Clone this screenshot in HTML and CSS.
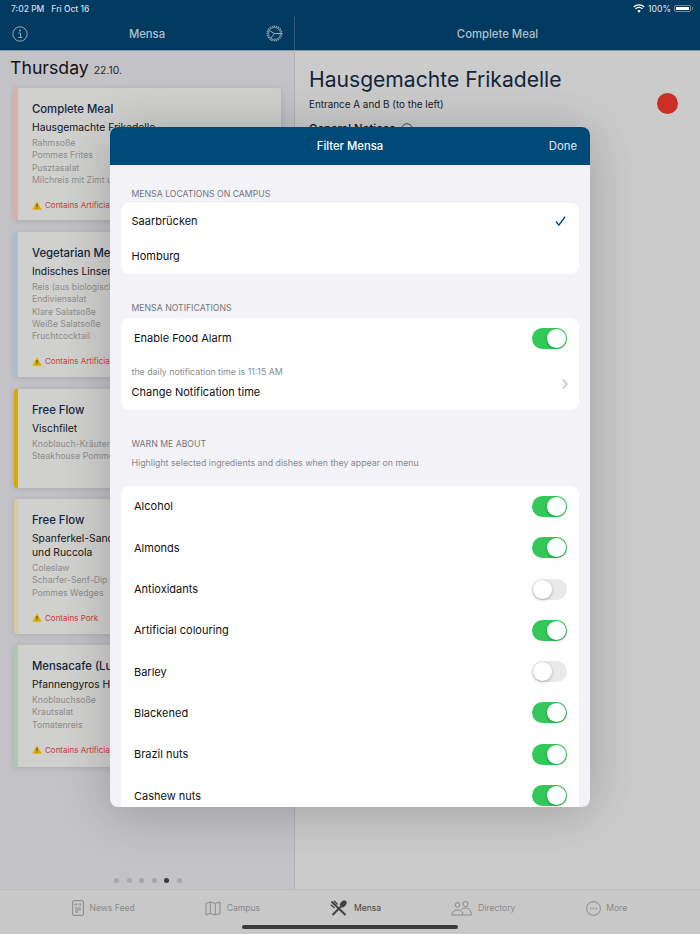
FILE: index.html
```html
<!DOCTYPE html>
<html lang="en">
<head>
<meta charset="utf-8">
<title>Mensa</title>
<link rel="stylesheet" href="styles.css">
</head>
<body>
<div class="app">
  <header class="topbar">
    <div class="status">
      <span class="status-left"><span>7:02 PM</span><span>Fri Oct 16</span></span>
      <span class="status-right">
        <svg class="wifi" width="12" height="9" viewBox="0 0 13 10"><path d="M6.5 9.6 4.6 7.5a2.7 2.7 0 0 1 3.8 0z" fill="#fff"/><path d="M2.6 5.4a5.5 5.5 0 0 1 7.8 0M.7 3.3a8.3 8.3 0 0 1 11.6 0" fill="none" stroke="#fff" stroke-width="1.5"/></svg>
        <span>100%</span>
        <span class="battery"><span class="battery-fill"></span></span>
      </span>
    </div>
    <div class="navs">
      <div class="nav nav-left">
        <svg class="nav-icon" width="16" height="16" viewBox="0 0 16 16"><circle cx="8" cy="8" r="7.2" fill="none" stroke="#95a9b8" stroke-width="1"/><circle cx="8" cy="4.6" r="1" fill="#95a9b8"/><path d="M6.4 7h2.1v4.4M6.2 11.5h4" fill="none" stroke="#95a9b8" stroke-width="1"/></svg>
        <span class="nav-title">Mensa</span>
        <svg class="nav-icon" width="17" height="17" viewBox="0 0 17 17"><circle cx="8.5" cy="8.5" r="7.2" fill="none" stroke="#95a9b8" stroke-width="1.5" stroke-dasharray="1.3 .9"/><circle cx="8.5" cy="8.5" r="6" fill="none" stroke="#95a9b8" stroke-width=".8"/><path d="M3.2 5.6 8.4 8.5 4.8 13.3M8.4 8.5h6" fill="none" stroke="#95a9b8" stroke-width="1"/></svg>
      </div>
      <div class="nav nav-right"><span class="nav-title">Complete Meal</span></div>
    </div>
  </header>

  <main class="split">
    <section class="left">
      <h1 class="day">Thursday <small>22.10.</small></h1>
      <article class="card card-red">
        <h2>Complete Meal</h2>
        <h3>Hausgemachte Frikadelle</h3>
        <ul><li>Rahmsoße</li><li>Pommes Frites</li><li>Pusztasalat</li><li>Milchreis mit Zimt und Zucker</li></ul>
        <p class="warn"><svg class="tri" viewBox="0 0 10 9"><path d="M5 .3 9.8 8.7H.2z"/><path class="mark" d="M4.6 3h.8v3h-.8zM4.6 6.6h.8v.9h-.8z"/></svg>Contains Artificial colouring</p>
      </article>
      <article class="card card-blue">
        <h2>Vegetarian Meal</h2>
        <h3>Indisches Linsencurry</h3>
        <ul><li>Reis (aus biologischem Anbau)</li><li>Endiviensalat</li><li>Klare Salatsoße</li><li>Weiße Salatsoße</li><li>Fruchtcocktail</li></ul>
        <p class="warn"><svg class="tri" viewBox="0 0 10 9"><path d="M5 .3 9.8 8.7H.2z"/><path class="mark" d="M4.6 3h.8v3h-.8zM4.6 6.6h.8v.9h-.8z"/></svg>Contains Artificial colouring</p>
      </article>
      <article class="card card-gold">
        <h2>Free Flow</h2>
        <h3>Vischfilet</h3>
        <ul><li>Knoblauch-Kräuter-Soße</li><li>Steakhouse Pommes</li></ul>
      </article>
      <article class="card card-sand">
        <h2>Free Flow</h2>
        <h3>Spanferkel-Sandwich<br>und Ruccola</h3>
        <ul><li>Coleslaw</li><li>Scharfer-Senf-Dip</li><li>Pommes Wedges</li></ul>
        <p class="warn"><svg class="tri" viewBox="0 0 10 9"><path d="M5 .3 9.8 8.7H.2z"/><path class="mark" d="M4.6 3h.8v3h-.8zM4.6 6.6h.8v.9h-.8z"/></svg>Contains Pork</p>
      </article>
      <article class="card card-green">
        <h2>Mensacafe (Lunch)</h2>
        <h3>Pfannengyros Hähnchen</h3>
        <ul><li>Knoblauchsoße</li><li>Krautsalat</li><li>Tomatenreis</li></ul>
        <p class="warn"><svg class="tri" viewBox="0 0 10 9"><path d="M5 .3 9.8 8.7H.2z"/><path class="mark" d="M4.6 3h.8v3h-.8zM4.6 6.6h.8v.9h-.8z"/></svg>Contains Artificial colouring</p>
      </article>
      <div class="dots"><i></i><i></i><i></i><i></i><i class="on"></i><i></i></div>
    </section>
    <section class="right">
      <div class="detail-head">
        <div>
          <h1 class="detail-title">Hausgemachte Frikadelle</h1>
          <p class="detail-sub">Entrance A and B (to the left)</p>
        </div>
        <span class="red-dot"></span>
      </div>
      <p class="notices">General Notices<svg width="12" height="12" viewBox="0 0 12 12" fill="none" stroke="#4a4a4c"><circle cx="6" cy="6" r="5.3"/></svg></p>
    </section>
  </main>

  <nav class="tabbar">
    <a class="tab"><svg width="12" height="16" viewBox="0 0 12 16" fill="none" stroke="#8a8a8a"><rect x=".6" y=".6" width="10.8" height="14.8" rx="1.4"/><path d="M3 3.5v2M4.5 3.5v2M7 3.5v2M8.5 3.5v2M3 8h6M3 10h6M3 12h3"/></svg>News Feed</a>
    <a class="tab"><svg width="16" height="15" viewBox="0 0 16 15" fill="none" stroke="#8a8a8a"><path d="M1 2.5 5.3 1l5 1.5L15 1v11.5L10.3 14l-5-1.500L1 14zM5.3 1v11.500M10.3 2.500V14"/></svg>Campus</a>
    <a class="tab tab-on"><svg width="18" height="16" viewBox="0 0 18 16" fill="none" stroke="#444"><path d="M1.500 1.500 15.500 15" stroke-width="2"/><path d="M.8 4.800 4.500 8M4 .8 7.500 4.500" stroke-width="1.400"/><path d="M2.500 15 11 6.500" stroke-width="2"/><ellipse cx="13.300" cy="3.800" rx="2.800" ry="3.900" transform="rotate(42 13.300 3.800)" fill="#444" stroke="none"/></svg>Mensa</a>
    <a class="tab"><svg width="21" height="15" viewBox="0 0 21 15" fill="none" stroke="#8a8a8a"><circle cx="6.500" cy="4" r="2.300"/><circle cx="14.500" cy="3" r="2.600"/><path d="M.8 14c0-3 2.500-5 5.700-5s5.500 2 5.500 5zM10.500 8.300c1-.7 2.500-1.300 4-1.300 3.500 0 5.800 2.600 5.800 7h-8"/></svg>Directory</a>
    <a class="tab"><svg width="15" height="15" viewBox="0 0 15 15" fill="none" stroke="#8a8a8a"><circle cx="7.500" cy="7.500" r="6.900"/><path d="M4 7.500h1.200M6.900 7.500h1.200M9.800 7.500H11" stroke-width="1.400"/></svg>More</a>
    <span class="home-bar"></span>
  </nav>

  <div class="modal">
    <div class="modal-head">
      <span class="modal-title">Filter Mensa</span>
      <span class="modal-done">Done</span>
    </div>
    <div class="modal-body">
      <p class="label label-first">MENSA LOCATIONS ON CAMPUS</p>
      <div class="group">
        <div class="row row-loc"><span>Saarbrücken</span><svg width="11" height="10" viewBox="0 0 12 11" fill="none" stroke="#004a7a" stroke-width="1.500"><path d="M1 6 4.300 10 11 .8"/></svg></div>
        <div class="row row-loc"><span>Homburg</span></div>
      </div>
      <p class="label label-notif">MENSA NOTIFICATIONS</p>
      <div class="group">
        <div class="row row-toggle"><span>Enable Food Alarm</span><span class="switch on"></span></div>
        <div class="row-change">
          <div class="change-text"><p class="hint">the daily notification time is 11:15 AM</p><p class="change">Change Notification time</p></div>
          <svg width="6" height="10" viewBox="0 0 6 10" fill="none" stroke="#b8b8bc" stroke-width="1.200"><path d="M.7.7 5 5 .7 9.300"/></svg>
        </div>
      </div>
      <p class="label label-warn">WARN ME ABOUT</p>
      <p class="hint hint-warn">Highlight selected ingredients and dishes when they appear on menu</p>
      <div class="group">
        <div class="row row-toggle"><span>Alcohol</span><span class="switch on"></span></div>
        <div class="row row-toggle"><span>Almonds</span><span class="switch on"></span></div>
        <div class="row row-toggle"><span>Antioxidants</span><span class="switch"></span></div>
        <div class="row row-toggle"><span>Artificial colouring</span><span class="switch on"></span></div>
        <div class="row row-toggle"><span>Barley</span><span class="switch"></span></div>
        <div class="row row-toggle"><span>Blackened</span><span class="switch on"></span></div>
        <div class="row row-toggle"><span>Brazil nuts</span><span class="switch on"></span></div>
        <div class="row row-toggle"><span>Cashew nuts</span><span class="switch on"></span></div>
      </div>
    </div>
  </div>
</div>
</body>
</html>
```
FILE: styles.css
```css
* { box-sizing: border-box; }
html, body { margin: 0; padding: 0; }
body { font-family: Inter, "Liberation Sans", sans-serif; width: 700px; height: 934px; overflow: hidden; }
h1, h2, h3, p, ul { margin: 0; padding: 0; font-weight: 400; }
li { list-style: none; }

.app { position: relative; width: 700px; height: 934px; display: flex; flex-direction: column; overflow: hidden; background: #c9c9c9; }

.topbar { height: 51px; flex: none; background: #003a60; border-bottom: 1px solid #8a9aa6; display: flex; flex-direction: column; }
.status { height: 17px; padding: 0 9px 0 11px; display: flex; justify-content: space-between; align-items: center; font-size: 8.5px; font-weight: 500; color: #d5dde3; }
.status-left { display: flex; gap: 7px; }
.status-right { display: flex; align-items: center; gap: 3px; }
.battery { position: relative; width: 17px; height: 7px; padding: 1px; border-radius: 2px; border: 1px solid #6f8ba0; display: block; }
.battery::after { content: ""; position: absolute; right: -3px; top: 1px; width: 1px; height: 3px; background: #6f8ba0; }
.battery-fill { display: block; width: 100%; height: 100%; background: #fff; }
.navs { flex: 1; display: flex; }
.nav { display: flex; align-items: center; justify-content: center; height: 33px; }
.nav-left { width: 295px; padding: 0 11px 0 12px; justify-content: space-between; border-right: 1px solid #33607f; }
.nav-right { flex: 1; }
.nav-title { font-size: 11.3px; font-weight: 500; color: #b2c0cb; }

.split { flex: 1; display: flex; min-height: 0; }
.left { position: relative; width: 295px; flex: none; background: #c2c2c7; border-right: 1px solid #b0b0b4; padding: 5px 13px 0 14px; }
.day { font-size: 17.7px; line-height: 24px; height: 24px; margin: 0 0 8px -4px; color: #141416; }
.day small { font-size: 10.4px; line-height: 1; color: #2b2b2e; }
.card { background: #d0d0cf; border-radius: 3px; padding: 13.5px 0 0 14px; margin-bottom: 12px; box-shadow: 0 1px 6px rgba(0,0,0,.12); border-left: 4px solid; overflow: hidden; white-space: nowrap; }
.card h2 { font-size: 11.3px; line-height: 15px; font-weight: 500; color: #112640; margin-bottom: 3.5px; }
.card h3 { font-size: 10.3px; line-height: 14px; color: #141416; margin-bottom: 3px; }
.card ul { font-size: 8.7px; line-height: 12.3px; color: #8c8c8c; }
.card-red { height: 132px; border-color: #dcaeac; }
.card-blue { height: 145px; border-color: #a9bdd4; }
.card-gold { height: 99px; margin-bottom: 11px; border-color: #d4a900; }
.card-sand { height: 135px; margin-bottom: 11px; border-color: #d9cb9f; }
.card-green { height: 122px; border-color: #adc7b3; }
.warn { display: flex; align-items: center; gap: 3px; margin-top: 13px; font-size: 8px; line-height: 12px; color: #cc3b35; }
.tri { width: 10px; height: 9px; fill: #e0ad00; }
.tri .mark { fill: #2c2400; }
.dots { position: absolute; left: 114px; bottom: 6px; display: flex; gap: 7.5px; }
.dots i { width: 5px; height: 5px; border-radius: 50%; background: #a8a8ac; }
.dots i.on { background: #3c3c40; }

.right { flex: 1; padding: 15px 22px 0 14px; background: #cbcbcb; }
.detail-head { display: flex; justify-content: space-between; align-items: flex-end; }
.detail-title { font-size: 21.1px; line-height: 28px; color: #13253b; }
.detail-sub { font-size: 9.9px; line-height: 13px; margin-top: 4px; color: #1c1c1e; }
.red-dot { width: 21px; height: 21px; border-radius: 50%; background: #cc2f25; margin-bottom: -3px; }
.notices { display: flex; align-items: center; gap: 6px; font-size: 11.3px; font-weight: 500; margin-top: 11px; color: #141416; }

.tabbar { position: relative; height: 45px; flex: none; background: #c8c8c8; border-top: 1px solid #bcbcbc; display: flex; padding: 9px 0 0 72px; align-items: flex-start; gap: 70.3px; }
.tab { display: flex; align-items: center; gap: 5.5px; font-size: 8.6px; color: #8a8a8a; height: 18px; }
.tab-on { color: #444; }
.home-bar { position: absolute; left: 242px; bottom: 5px; width: 216px; height: 4px; border-radius: 2px; background: #3c3c3e; }

.modal { position: absolute; left: 110px; top: 127px; width: 480px; height: 680px; border-radius: 8px; overflow: hidden; background: #f2f2f7; display: flex; flex-direction: column; box-shadow: 0 4px 50px rgba(0,0,0,.22); }
.modal-head { height: 38px; flex: none; background: #004a7a; display: flex; align-items: center; justify-content: center; position: relative; color: #fff; }
.modal-title { font-size: 11.3px; font-weight: 500; }
.modal-done { position: absolute; right: 13px; font-size: 11.3px; color: #e3ebf1; }
.modal-body { flex: 1; overflow: hidden; padding: 0 11px; }
.label { font-size: 8.7px; line-height: 12px; color: #76767b; padding-left: 10.5px; }
.label-first { margin: 23px 0 3px; }
.label-notif { margin: 28px 0 3.5px; }
.label-warn { margin: 28px 0 7.7px; }
.hint { font-size: 8.8px; line-height: 12px; color: #8a8a8e; }
.hint-warn { padding-left: 10.5px; margin-bottom: 16.3px; }
.group { background: #fff; border-radius: 8px; overflow: hidden; }
.row { display: flex; justify-content: space-between; align-items: center; font-size: 11px; color: #111; }
.row-loc { height: 35.5px; padding: 0 13px 0 10.5px; }
.row-toggle { height: 41.3px; padding: 0 12px 0 13px; }
.row-change { display: flex; justify-content: space-between; align-items: center; padding: 0 11px 0 10.5px; height: 51px; }
.change-text { margin-bottom: 2px; }
.change { font-size: 11px; line-height: 16px; margin-top: 6px; color: #111; }
.switch { position: relative; width: 35px; height: 21px; border-radius: 11px; background: #e9e9ea; display: block; }
.switch::after { content: ""; position: absolute; left: 1px; top: 1px; width: 19px; height: 19px; border-radius: 50%; background: #fff; box-shadow: 0 1px 3px rgba(0,0,0,.3); }
.switch.on { background: #34c759; }
.switch.on::after { left: 15px; }
```
